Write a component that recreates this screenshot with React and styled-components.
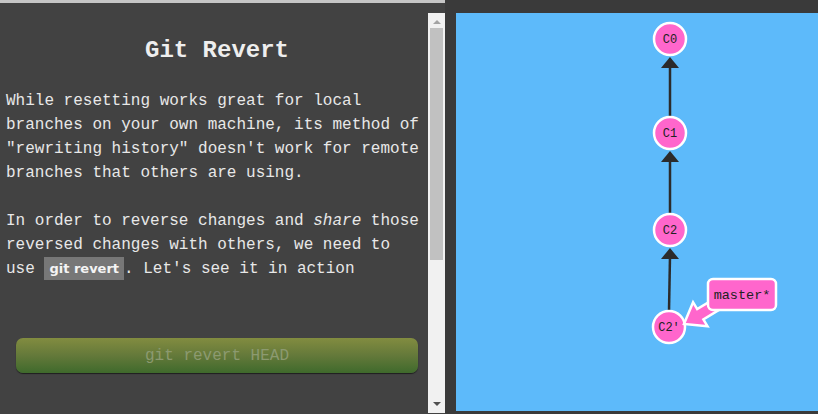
import React from 'react';
import styled, { createGlobalStyle } from 'styled-components';

const GlobalStyle = createGlobalStyle`
  html, body {
    margin: 0;
    padding: 0;
    background: #424242;
    overflow: hidden;
  }
`;

const Page = styled.div`
  display: flex;
  width: 818px;
  height: 414px;
  background: #424242;
`;

const LeftColumn = styled.div`
  width: 445px;
  display: flex;
  flex-direction: column;
`;

const TopStrip = styled.div`
  height: 3px;
  background: #c6c6c6;
`;

const LeftBody = styled.div`
  display: flex;
  flex: 1;
`;

const Lesson = styled.div`
  width: 428px;
  box-sizing: border-box;
  padding: 34px 9px 0 6px;
  color: #e8e8e8;
  font-family: "Liberation Mono", "Courier New", monospace;
  font-size: 16px;
  line-height: 24px;
`;

const Title = styled.h1`
  margin: 0;
  padding-left: 9px;
  font-size: 24px;
  line-height: 28px;
  font-weight: bold;
  text-align: center;
  color: #eeeeee;
`;

const Paragraph = styled.p`
  margin: ${p => p.$top}px 0 0 0;
`;

const Code = styled.span`
  display: inline-block;
  background: #777777;
  color: #f4f4f4;
  font-family: "DejaVu Sans", "Liberation Sans", sans-serif;
  font-weight: bold;
  font-size: 13px;
  line-height: 23px;
  padding: 0 5px;
  vertical-align: top;
`;

const ActionButton = styled.div`
  margin: 57px 0 0 10px;
  width: 402px;
  height: 35px;
  border-radius: 7px;
  background: linear-gradient(to bottom, #828c40 0%, #64793a 50%, #3f6a2c 100%);
  box-shadow: 0 1px 1px rgba(0, 0, 0, 0.55);
  display: flex;
  align-items: center;
  justify-content: center;
  color: #8c9a70;
  font-size: 16px;
`;

const Scrollbar = styled.div`
  width: 17px;
  margin-top: 10px;
  height: 400px;
  background: #f1f1f1;
  display: flex;
  flex-direction: column;
  align-items: center;
`;

const ScrollArrow = styled.div`
  width: 0;
  height: 0;
  border-left: 4px solid transparent;
  border-right: 4px solid transparent;
  ${p => p.$down
    ? 'border-top: 4px solid #505050; margin-top: auto; margin-bottom: 7px;'
    : 'border-bottom: 4px solid #a3a3a3; margin-top: 7px;'}
`;

const Thumb = styled.div`
  width: 13px;
  height: 232px;
  margin-top: 4px;
  background: #c1c1c1;
`;

const Stage = styled.div`
  flex: 1;
  background: #3a3a3a;
  padding: 13px 0 0 11px;
`;

const Canvas = styled.div`
  height: 398px;
  background: #5dbafa;
`;

const nodes = [
  { id: 'C0', x: 670, y: 39 },
  { id: 'C1', x: 670, y: 133 },
  { id: 'C2', x: 670, y: 230 },
  { id: "C2'", x: 669, y: 327 },
];

const GitGraph = () => (
  <svg width="362" height="398" viewBox="456 13 362 398">
    {nodes.slice(1).map((n, i) => {
      const parent = nodes[i];
      const tip = parent.y + 18;
      return (
        <g key={n.id}>
          <line x1={parent.x} y1={tip + 8} x2={n.x} y2={n.y - 16} stroke="#2b2b2b" strokeWidth="2.5" />
          <polygon
            points={`${parent.x},${tip} ${parent.x - 9},${tip + 11} ${parent.x + 9},${tip + 11}`}
            fill="#2b2b2b"
          />
        </g>
      );
    })}
    {nodes.map(n => (
      <g key={n.id}>
        <circle cx={n.x} cy={n.y} r="16" fill="#ff66cc" stroke="#ffffff" strokeWidth="2.5" />
        <text
          x={n.x}
          y={n.y + 4}
          textAnchor="middle"
          fontFamily="Liberation Mono, monospace"
          fontSize="12"
          fill="#222"
        >
          {n.id}
        </text>
      </g>
    ))}
    <polygon
      transform="translate(684,324) rotate(-31)"
      points="0,0 19,-14 19,-6 48,-6 48,6 19,6 19,14"
      fill="#ff66cc"
      stroke="#ffffff"
      strokeWidth="2.5"
      strokeLinejoin="miter"
    />
    <rect x="708" y="279" width="68" height="31" rx="5" fill="#ff66cc" stroke="#ffffff" strokeWidth="2.5" />
    <text
      x="742"
      y="299"
      textAnchor="middle"
      fontFamily="Liberation Mono, monospace"
      fontSize="13.5"
      fill="#222"
    >
      master*
    </text>
  </svg>
);

const App = () => (
  <Page>
    <GlobalStyle />
    <LeftColumn>
      <TopStrip />
      <LeftBody>
        <Lesson>
          <Title>Git Revert</Title>
          <Paragraph $top={24}>
            While resetting works great for local branches on your own machine, its method of
            "rewriting history" doesn't work for remote branches that others are using.
          </Paragraph>
          <Paragraph $top={24}>
            In order to reverse changes and <em>share</em> those reversed changes with others,
            we need to use <Code>git revert</Code>. Let's see it in action
          </Paragraph>
          <ActionButton>git revert HEAD</ActionButton>
        </Lesson>
        <Scrollbar>
          <ScrollArrow />
          <Thumb />
          <ScrollArrow $down />
        </Scrollbar>
      </LeftBody>
    </LeftColumn>
    <Stage>
      <Canvas>
        <GitGraph />
      </Canvas>
    </Stage>
  </Page>
);

export default App;
